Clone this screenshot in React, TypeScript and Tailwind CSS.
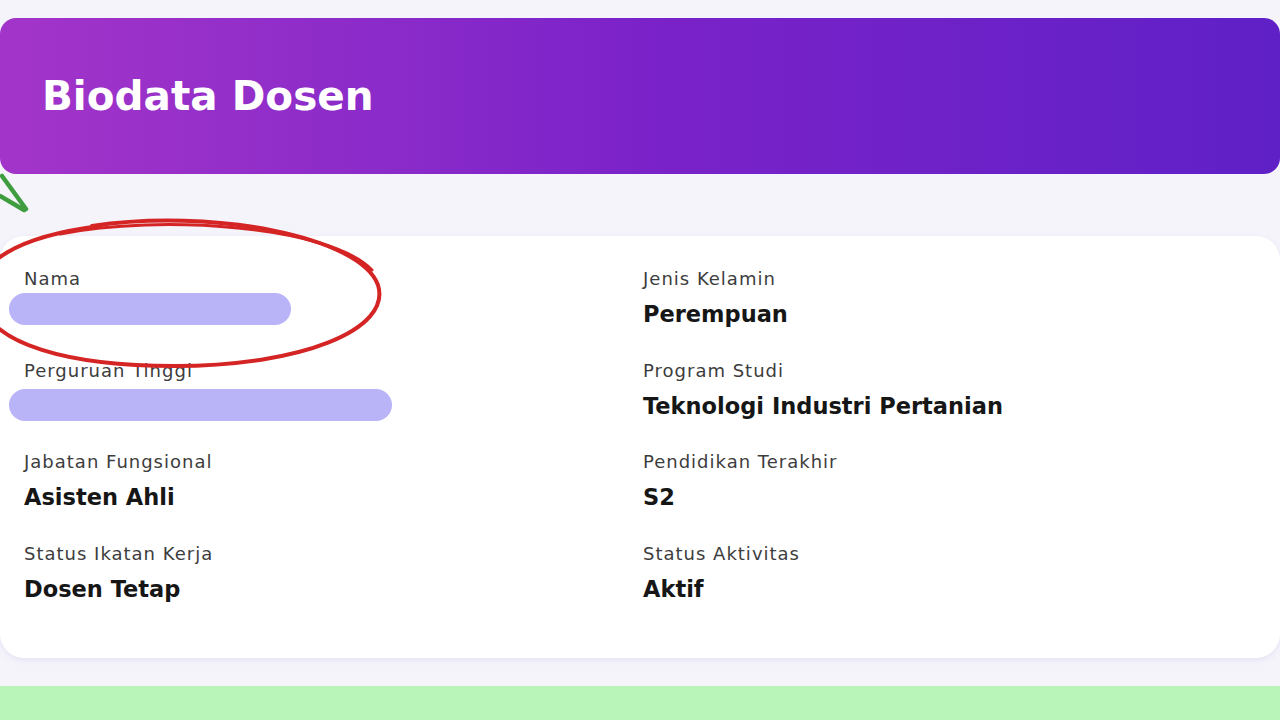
import React from "react";

// TYPES
type Field = {
    label: string;
    value?: string;
    redacted?: number; // width of the blurred bar
};

const leftFields: Field[] = [
    { label: "Nama", redacted: 282 },
    { label: "Perguruan Tinggi", redacted: 383 },
    { label: "Jabatan Fungsional", value: "Asisten Ahli" },
    { label: "Status Ikatan Kerja", value: "Dosen Tetap" },
];

const rightFields: Field[] = [
    { label: "Jenis Kelamin", value: "Perempuan" },
    { label: "Program Studi", value: "Teknologi Industri Pertanian" },
    { label: "Pendidikan Terakhir", value: "S2" },
    { label: "Status Aktivitas", value: "Aktif" },
];

const FieldItem = ({ field, first }: { field: Field; first?: boolean }) => (
    <div className="flex h-[63px] flex-col">
        <p className="text-[18px] leading-[24px] tracking-[1px] text-[#3d3d3d]">
            {field.label}
        </p>
        {field.redacted ? (
            <div
                className={`${first ? "mt-[2px]" : "mt-[6px]"} -ml-[15px] h-[32px] rounded-full bg-[#b9b3f8]`}
                style={{ width: field.redacted }}
            />
        ) : (
            <p className="mt-[7px] text-[22.5px] leading-[32px] font-bold text-[#161616]">
                {field.value}
            </p>
        )}
    </div>
);

const App = () => {
    return (
        <div
            className="relative min-h-screen w-full overflow-hidden bg-[#f5f4fb] pt-[18px]"
            style={{ fontFamily: '"DejaVu Sans", "Noto Sans", sans-serif' }}
        >
            {/* --------------- header */}
            <div className="flex h-[156px] items-center rounded-2xl bg-gradient-to-r from-[#a334c9] via-[#7b22c9] to-[#5f20c6] px-[42px]">
                <h1 className="text-[40.5px] font-bold text-white">Biodata Dosen</h1>
            </div>

            {/* --------------- biodata card */}
            <div className="mt-[62px] h-[422px] rounded-3xl bg-white px-6 pt-[31px] shadow-[0_2px_6px_rgba(120,100,180,0.12)]">
                <div className="grid grid-cols-[619px_1fr]">
                    <div className="flex flex-col gap-[28.5px]">
                        {leftFields.map((f, i) => (
                            <FieldItem key={f.label} field={f} first={i === 0} />
                        ))}
                    </div>
                    <div className="flex flex-col gap-[28.5px]">
                        {rightFields.map((f) => (
                            <FieldItem key={f.label} field={f} />
                        ))}
                    </div>
                </div>
            </div>

            {/* --------------- next section */}
            <div className="mt-[28px] h-[60px] bg-[#b9f4b9]" />

            {/* annotations drawn over the screenshot */}
            <svg
                className="pointer-events-none absolute left-0 top-0"
                width="1280"
                height="720"
                viewBox="0 0 1280 720"
                fill="none"
            >
                <path
                    d="M2 176 L26 209 M0 196 L24 210"
                    stroke="#3f9d3f"
                    strokeWidth="4.5"
                    strokeLinecap="round"
                />
                <path
                    d="M92 226 C210 208 360 236 378 285 C392 330 300 366 175 366 C70 366 -10 345 -20 300 C-28 262 20 236 100 226"
                    stroke="#d42424"
                    strokeWidth="4"
                    strokeLinecap="round"
                />
                <path
                    d="M60 234 C160 214 330 226 372 270"
                    stroke="#d42424"
                    strokeWidth="3"
                    strokeLinecap="round"
                />
            </svg>
        </div>
    );
};

export default App;
